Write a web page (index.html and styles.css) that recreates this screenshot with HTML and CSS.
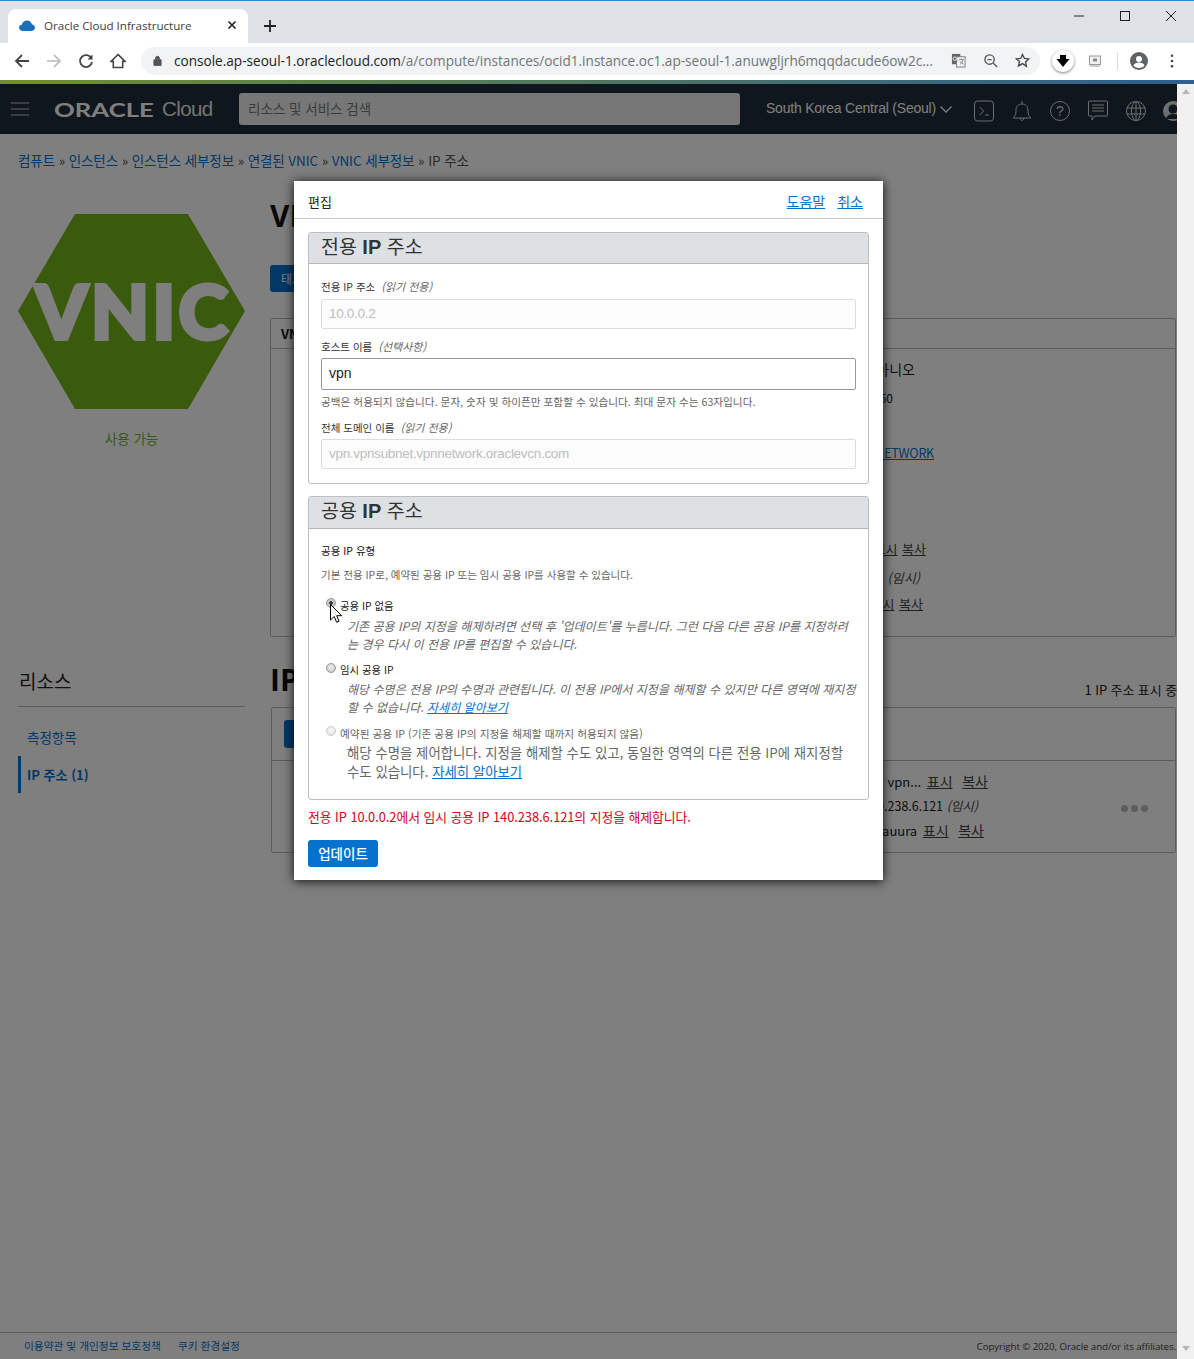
FILE: index.html
```html
<!DOCTYPE html>
<html lang="ko">
<head>
<meta charset="utf-8">
<title>Oracle Cloud Infrastructure</title>
<link rel="stylesheet" href="styles.css">
</head>
<body>
<div class="tabstrip">
  <div class="tab">
    <svg class="favicon" viewBox="0 0 16 11"><path d="M4 11C1.8 11 0 9.6 0 7.7 0 6 1.3 4.8 2.9 4.5 3.6 2 5.6 0.5 8 0.5c2.600 0 4.500 1.700 5 4 1.500 0.300 3 1.400 3 3.200 0 1.900-1.600 3.300-3.600 3.300z" fill="#1a6fb8"/></svg>
    <span class="tab-title">Oracle Cloud Infrastructure</span>
    <svg class="tab-x" viewBox="0 0 10 10"><path d="M1.500 1.500l7 7M8.500 1.500l-7 7" stroke="#222" stroke-width="1.700"/></svg>
  </div>
  <svg class="tab-plus" viewBox="0 0 12 12"><path d="M6 0v12M0 6h12" stroke="#222" stroke-width="1.800"/></svg>
  <div class="winctl">
    <svg viewBox="0 0 12 12"><path d="M1 6h10" stroke="#222" stroke-width="1"/></svg>
    <svg viewBox="0 0 12 12"><rect x="1.500" y="1.500" width="9" height="9" fill="none" stroke="#222" stroke-width="1"/></svg>
    <svg viewBox="0 0 12 12"><path d="M1 1l10 10M11 1L1 11" stroke="#222" stroke-width="1"/></svg>
  </div>
</div>
<div class="toolbar">
  <svg class="nav" viewBox="0 0 16 16"><path d="M15 8H2M8 2L2 8l6 6" fill="none" stroke="#444" stroke-width="1.800"/></svg>
  <svg class="nav" viewBox="0 0 16 16"><path d="M1 8h13M8 2l6 6-6 6" fill="none" stroke="#b4b6b8" stroke-width="1.600"/></svg>
  <svg class="nav" viewBox="0 0 16 16"><path d="M13.500 5.500A6 6 0 1 0 14 9" fill="none" stroke="#444" stroke-width="1.800"/><path d="M14.500 1.500v5h-5z" fill="#444"/></svg>
  <svg class="nav" viewBox="0 0 16 16"><path d="M8 1.500L1 8.500h2.300V14.500h9.400V8.500H15z" fill="none" stroke="#444" stroke-width="1.600"/></svg>
  <div class="omnibox">
    <svg class="lock" viewBox="0 0 10 12"><path d="M1 5.200h8V11.500H1zM2.800 5V3.500a2.200 2.200 0 0 1 4.400 0V5" fill="#555" stroke="#555" stroke-width="1"/></svg>
    <span class="url"><span class="host">console.ap-seoul-1.oraclecloud.com</span>/a/compute/instances/ocid1.instance.oc1.ap-seoul-1.anuwgljrh6mqqdacude6ow2c...</span>
    <svg class="omni-i" viewBox="0 0 16 16"><rect x="1" y="1" width="9" height="11" fill="#666"/><rect x="6" y="4" width="9" height="11" fill="#f4f4f4" stroke="#777"/><path d="M8.500 7h5M11 6v1M9.500 12c2-1 3-3 3.500-5M10 9c1 1.500 2 2.500 3.500 3" stroke="#666" fill="none" stroke-width=".8"/><circle cx="4" cy="6" r="1.800" fill="none" stroke="#fff" stroke-width=".9"/></svg>
    <svg class="omni-i" viewBox="0 0 16 16"><circle cx="7" cy="7" r="5" fill="none" stroke="#555" stroke-width="1.400"/><path d="M11 11l4 4M4.800 7h4.400" stroke="#555" stroke-width="1.400"/></svg>
    <svg class="omni-i" viewBox="0 0 16 16"><path d="M8 1.500l2 4.300 4.700.5-3.500 3.200 1 4.700L8 11.300l-4.200 2.400 1-4.700L1.300 6.300 6 5.800z" fill="none" stroke="#444" stroke-width="1.400"/></svg>
  </div>
  <div class="ext-pin"><svg viewBox="0 0 14 14"><path d="M4 1h6v4h3.500L7 13 .5 5H4z" fill="#000"/></svg></div>
  <svg class="ext-box" viewBox="0 0 12 12"><rect x=".5" y="1" width="11" height="8.500" fill="#f1f1f1" stroke="#999"/><rect x="4" y="3.500" width="4" height="3" fill="#888"/><path d="M1 11h10" stroke="#999"/></svg>
  <span class="tool-sep"></span>
  <svg class="avatar" viewBox="0 0 18 18"><circle cx="9" cy="9" r="9" fill="#5f6368"/><circle cx="9" cy="7" r="3" fill="#fff"/><path d="M3.500 13.500c1-2.300 3-3 5.500-3s4.500.7 5.500 3C13 15.300 11 16 9 16s-4-.7-5.500-2.500z" fill="#fff"/></svg>
  <svg class="kebab" viewBox="0 0 4 16"><circle cx="2" cy="2" r="1.500" fill="#444"/><circle cx="2" cy="8" r="1.500" fill="#444"/><circle cx="2" cy="14" r="1.500" fill="#444"/></svg>
</div>
<div class="accent"></div>
<div class="viewport">
  <div class="page">
    <header class="topbar">
      <svg class="burger" viewBox="0 0 18 14"><path d="M0 1h18M0 7h18M0 13h18" stroke="#c9c9c9" stroke-width="1.200"/></svg>
      <div class="logo"><span class="logo-o">ORACLE</span><span class="logo-c">Cloud</span></div>
      <div class="search">리소스 및 서비스 검색</div>
      <div class="region">South Korea Central (Seoul)
        <svg viewBox="0 0 12 7"><path d="M.5.500L6 6l5.500-5.500" fill="none" stroke="#fff" stroke-width="1.300"/></svg>
      </div>
      <div class="top-icons">
        <svg viewBox="0 0 20 22"><rect x=".5" y="1" width="19" height="20" rx="3" fill="none" stroke="#ddd"/><path d="M6 7l3.500 4L6 15M11 15h4" fill="none" stroke="#ddd"/></svg>
        <svg viewBox="0 0 20 22"><path d="M1 18h18c-2-2-3-3-3-8 0-3.500-2.500-6-6-6S4 6.500 4 10c0 5-1 6-3 8zM8 18c0 3 4 3 4 0M10 4V1" fill="none" stroke="#ddd"/></svg>
        <svg viewBox="0 0 20 22"><circle cx="10" cy="11" r="9.500" fill="none" stroke="#ddd"/><text x="10" y="16" class="q-mark">?</text></svg>
        <svg viewBox="0 0 20 22"><path d="M1.500 1h17a1 1 0 0 1 1 1v13a1 1 0 0 1-1 1H7l-3 4v-4H1.500a1 1 0 0 1-1-1V2a1 1 0 0 1 1-1zM4 5h12M4 8h12M4 11h12" fill="none" stroke="#ddd"/></svg>
        <svg viewBox="0 0 20 22"><circle cx="10" cy="11" r="9.500" fill="none" stroke="#ddd"/><ellipse cx="10" cy="11" rx="4.500" ry="9.500" fill="none" stroke="#ddd"/><path d="M1 8h18M1 14h18M10 1.500v19" stroke="#ddd" fill="none"/></svg>
        <svg class="top-user" viewBox="0 0 20 22"><circle cx="10" cy="11" r="10" fill="#ddd"/><circle cx="10" cy="9" r="4.500" fill="#1e2c3a"/><path d="M3 19c1-4 4-5 7-5s6 1 7 5" fill="#1e2c3a"/></svg>
      </div>
    </header>
    <nav class="crumbs"><a>컴퓨트</a> » <a>인스턴스</a> » <a>인스턴스 세부정보</a> » <a>연결된 VNIC</a> » <a>VNIC 세부정보</a> » IP 주소</nav>
    <div class="columns">
      <aside class="side">
        <svg class="hex" viewBox="0 0 227 195"><polygon points="0,97 57,0 170,0 227,97 170,195 57,195" fill="#74b41c"/><text x="17" y="124.500" class="hex-text" textLength="193" lengthAdjust="spacing">VNIC</text></svg>
        <div class="status">사용 가능</div>
        <h3 class="res-title">리소스</h3>
        <ul class="res-list">
          <li class="res-item">측정항목</li>
          <li class="res-item res-active">IP 주소 (1)</li>
        </ul>
      </aside>
      <main class="main">
        <h1 class="vnic-title">VNIC 세부정보</h1>
        <div class="tag-btn">태그 추가</div>
        <section class="info">
          <h4 class="info-title">VNIC 정보</h4>
          <div class="info-top"></div>
          <div class="info-body">
            <div class="kv kv-a">프라이빗 IP 확인: 아니오</div>
            <div class="kv kv-b">MAC 주소: 02:00:17:00:00:50</div>
            <div class="kv kv-c">가상 클라우드 네트워크: <a class="under">VPNNETWORK</a></div>
            <div class="kv kv-d">OCID: ...wauura <span class="plain-l">표시</span> <span class="plain-l">복사</span></div>
            <div class="kv kv-e">IP 주소: 140.238.6.121 <i>(임시)</i></div>
            <div class="kv kv-f">OCID: ...wau <span class="plain-l">표시</span> <span class="plain-l">복사</span></div>
          </div>
        </section>
        <div class="ip-head">
          <h2 class="ip-title">IP 주소</h2>
          <span class="ip-count">1 IP 주소 표시 중</span>
        </div>
        <section class="ip-table">
          <div class="ip-tools"><span class="ip-btn"></span></div>
          <div class="ip-row">
            <div class="ip-lines">
              <div class="il il-a">전체 도메인 이름: vpn... <span class="plain-l gap gap-first">표시</span> <span class="plain-l gap">복사</span></div>
              <div class="il il-b">공용 IP 주소: 140.238.6.121 <i>(임시)</i></div>
              <div class="il il-c">OCID: ...vauura <span class="plain-l gap gap-first">표시</span> <span class="plain-l gap">복사</span></div>
            </div>
            <div class="dots"><span></span><span></span><span></span></div>
          </div>
        </section>
      </main>
    </div>
    <footer class="foot">
      <div class="foot-links"><a>이용약관 및 개인정보 보호정책</a><a>쿠키 환경설정</a></div>
      <div class="copy">Copyright © 2020, Oracle and/or its affiliates.</div>
    </footer>
    <div class="overlay"></div>
    <div class="modal">
      <div class="modal-head">
        <span>편집</span>
        <span class="modal-links"><a class="link">도움말</a><a class="link">취소</a></span>
      </div>
      <div class="modal-body">
        <section class="panel panel-one">
          <h2 class="panel-head">전용 <b>IP</b> 주소</h2>
          <div class="panel-content">
            <label class="flabel">전용 IP 주소 <i>(읽기 전용)</i></label>
            <div class="input input-ro">10.0.0.2</div>
            <label class="flabel flabel-gap">호스트 이름 <i>(선택사항)</i></label>
            <div class="input input-on">vpn</div>
            <p class="help">공백은 허용되지 않습니다. 문자, 숫자 및 하이픈만 포함할 수 있습니다. 최대 문자 수는 63자입니다.</p>
            <label class="flabel flabel-gap2">전체 도메인 이름 <i>(읽기 전용)</i></label>
            <div class="input input-ro input-last">vpn.vpnsubnet.vpnnetwork.oraclevcn.com</div>
          </div>
        </section>
        <section class="panel panel-two">
          <h2 class="panel-head">공용 <b>IP</b> 주소</h2>
          <div class="panel-content panel-content-two">
            <div class="flabel flabel-dark">공용 IP 유형</div>
            <p class="help help-type">기본 전용 IP로, 예약된 공용 IP 또는 임시 공용 IP를 사용할 수 있습니다.</p>
            <div class="opt opt-first">
              <span class="radio radio-on"></span><span class="opt-label">공용 IP 없음</span>
              <p class="opt-desc">기존 공용 IP의 지정을 해제하려면 선택 후 '업데이트'를 누릅니다. 그런 다음 다른 공용 IP를 지정하려는 경우 다시 이 전용 IP를 편집할 수 있습니다.</p>
            </div>
            <div class="opt opt-temp">
              <span class="radio"></span><span class="opt-label">임시 공용 IP</span>
              <p class="opt-desc">해당 수명은 전용 IP의 수명과 관련됩니다. 이 전용 IP에서 지정을 해제할 수 있지만 다른 영역에 재지정할 수 없습니다. <a class="link">자세히 알아보기</a></p>
            </div>
            <div class="opt opt-off">
              <span class="radio radio-dis"></span><span class="opt-label">예약된 공용 IP (기존 공용 IP의 지정을 해제할 때까지 허용되지 않음)</span>
              <p class="opt-plain">해당 수명을 제어합니다. 지정을 해제할 수도 있고, 동일한 영역의 다른 전용 IP에 재지정할 수도 있습니다. <a class="link">자세히 알아보기</a></p>
            </div>
          </div>
        </section>
        <p class="warn">전용 IP 10.0.0.2에서 임시 공용 IP 140.238.6.121의 지정을 해제합니다.</p>
        <div class="update">업데이트</div>
      </div>
      <svg class="cursor" viewBox="0 0 12 19"><path d="M.5.500v15.500l3.700-3.500 2.400 5.800 2.500-1-2.400-5.600h5z" fill="#fff" stroke="#000"/></svg>
    </div>
  </div>
  <div class="scrollbar">
    <svg viewBox="0 0 8 5"><path d="M4 0l4 5H0z" fill="#b5b5b5"/></svg>
    <svg viewBox="0 0 8 5"><path d="M4 5l4-5H0z" fill="#b5b5b5"/></svg>
  </div>
</div>
</body>
</html>
```
FILE: styles.css
```css
* { box-sizing: border-box; }
html, body { margin: 0; padding: 0; }
body {
  width: 1194px; height: 1359px; overflow: hidden;
  display: flex; flex-direction: column;
  font-family: "Noto Sans CJK KR", "Liberation Sans", sans-serif;
  background: #fff; color: #222;
}
p, h1, h2, h3, h4, ul { margin: 0; padding: 0; }
svg { display: block; flex: none; }

/* browser chrome */
.tabstrip { height: 43px; background: #dee1e6; border-top: 1px solid #2e87c8; display: flex; align-items: flex-end; padding-left: 8px; position: relative; flex: none; }
.tab { width: 240px; height: 34px; background: #fff; border-radius: 8px 8px 0 0; display: flex; align-items: center; padding: 0 11px 2px 11px; }
.favicon { width: 16px; height: 11px; margin-top: 1px; }
.tab-title { font: 11.600px "Open Sans", sans-serif; color: #3c4043; margin-left: 9px; flex: 1; white-space: nowrap; }
.tab-x { width: 10px; height: 10px; }
.tab-plus { width: 12px; height: 12px; margin: 0 0 11px 16px; }
.winctl { position: absolute; right: 17px; top: 9px; display: flex; gap: 34px; }
.winctl svg { width: 12px; height: 12px; }
.toolbar { height: 37px; background: #fff; display: flex; align-items: center; padding: 0 0 2px 14px; flex: none; }
.nav { width: 16px; height: 16px; margin-right: 16px; }
.omnibox { width: 899px; height: 28px; margin-left: -1px; background: #f1f3f4; border-radius: 14px; display: flex; align-items: center; padding-left: 12px; flex: none; }
.lock { width: 9px; height: 11px; }
.url { font: 13.600px "Open Sans", sans-serif; color: #70757a; margin-left: 12px; width: 760px; white-space: nowrap; overflow: hidden; flex: none; }
.host { color: #222; }
.omni-i { width: 15px; height: 15px; margin-left: 17px; }
.ext-pin { width: 22px; height: 22px; border-radius: 50%; background: #fff; box-shadow: 0 1px 3px rgba(0,0,0,.5); margin-left: 12px; display: flex; align-items: center; justify-content: center; flex: none; }
.ext-pin svg { width: 14px; height: 14px; }
.ext-box { width: 12px; height: 12px; margin-left: 15px; }
.tool-sep { width: 1px; height: 18px; background: #dadce0; margin-left: 16px; flex: none; }
.avatar { width: 18px; height: 18px; margin-left: 12px; }
.kebab { width: 4px; height: 14px; margin-left: 22px; }
.accent { height: 4px; flex: none; background: linear-gradient(90deg, #6f8f2f, #2d5f92); }

.viewport { flex: 1; display: flex; min-height: 0; }
.scrollbar { width: 17px; background: #f1f1f1; display: flex; flex-direction: column; justify-content: space-between; align-items: center; padding: 5px 0 8px; flex: none; }
.scrollbar svg { width: 8px; height: 5px; }
.page { flex: 1; min-width: 0; position: relative; display: flex; flex-direction: column; background: #fff; overflow: hidden; }

/* console header */
.topbar { height: 50px; background: #1e2c3a; display: flex; align-items: center; color: #fff; flex: none; }
.burger { width: 18px; height: 14px; margin-left: 11px; }
.logo { margin-left: 25px; width: 160px; white-space: nowrap; color: #fff; display: flex; align-items: center; flex: none; }
.logo-o { font: 700 19.500px "Lato", sans-serif; transform: scaleX(1.32); transform-origin: left; display: inline-block; width: 108px; flex: none; }
.logo-c { font: 20.500px "Liberation Sans", sans-serif; letter-spacing: -.6px; color: #e8e8e8; }
.search { width: 501px; height: 32px; margin-left: 25px; background: #eee; border-radius: 3px; color: #777; font-size: 13.500px; line-height: 30px; padding-left: 9px; flex: none; }
.region { font: 14px "Liberation Sans", sans-serif; letter-spacing: -.22px; margin-left: 26px; display: flex; align-items: center; gap: 4px; white-space: nowrap; margin-top: -2px; flex: none; }
.region svg { width: 12px; height: 7px; margin-top: 3px; }
.top-icons { display: flex; margin-left: 22px; gap: 18px; margin-top: 3px; flex: none; }
.top-icons svg { width: 20px; height: 22px; }
.q-mark { font: 14px "Liberation Sans", sans-serif; fill: #ddd; text-anchor: middle; }
.top-user { margin-left: -1px; }

/* page behind */
.crumbs { font-size: 13.500px; line-height: 18px; margin: 17px 0 0 18px; color: #555; letter-spacing: -.1px; flex: none; }
.crumbs a { color: #0572ce; }
.columns { display: flex; flex: none; margin-top: 27px; padding-left: 18px; }
.side { width: 227px; flex: none; padding-top: 18px; }
.hex { width: 227px; height: 195px; }
.hex-text { font: 900 75px "Lato", sans-serif; fill: #fff; stroke: #fff; stroke-width: 4px; }
.status { text-align: center; color: #74b41c; font-size: 13.500px; line-height: 18px; margin-top: 20px; }
.res-title { font-weight: 400; font-size: 19px; line-height: 26px; margin-top: 221px; padding-bottom: 12px; border-bottom: 1px solid #bbb; color: #222; padding-left: 1px; }
.res-list { list-style: none; margin-top: 12px; }
.res-item { font-size: 13.500px; line-height: 37px; height: 37px; padding-left: 9px; color: #0572ce; }
.res-active { border-left: 3px solid #0572ce; padding-left: 6px; font-weight: 700; font-size: 13px; }
.main { margin-left: 25px; width: 906px; flex: none; }
.vnic-title { font: 700 30px "Open Sans", "Noto Sans CJK KR", sans-serif; line-height: 40px; color: #111; white-space: nowrap; }
.tag-btn { width: 80px; height: 27px; margin-top: 29px; background: #0572ce; color: #fff; font-size: 12px; line-height: 27px; padding-left: 11px; border-radius: 3px; }
.info { margin-top: 26px; height: 319px; border: 1px solid #bbb; border-radius: 2px; position: relative; }
.info-title { position: absolute; left: 10px; top: 6px; font-size: 13px; line-height: 18px; color: #111; }
.info-top { height: 30px; border-bottom: 1px solid #bbb; }
.info-body { position: relative; height: 287px; font-size: 13px; }
.kv { position: absolute; white-space: nowrap; line-height: 18px; color: #222; }
.kv-a { right: 260px; top: 11px; font-size: 14px; }
.kv-b { right: 282px; top: 40px; font-size: 12px; }
.kv-c { right: 241px; top: 95px; font-size: 12.500px; letter-spacing: -.2px; }
.kv-d { right: 249px; top: 191px; }
.kv-e { right: 255px; top: 220px; }
.kv-f { right: 252px; top: 246px; }
.under { text-decoration: underline; color: #0572ce; }
.plain-l { text-decoration: underline; color: #444; margin-left: 1px; }
.kv i, .il i { color: #444; }
.ip-head { display: flex; justify-content: space-between; align-items: flex-end; margin-top: 24px; height: 46px; padding-bottom: 8px; }
.ip-title { font: 700 30px "Open Sans", "Noto Sans CJK KR", sans-serif; line-height: 40px; color: #111; margin-bottom: -1px; white-space: nowrap; }
.ip-count { font-size: 13px; line-height: 18px; letter-spacing: -.1px; white-space: nowrap; margin-right: -1px; }
.ip-table { height: 146px; margin-left: 1px; border: 1px solid #bbb; border-radius: 2px; }
.ip-tools { height: 53px; border-bottom: 1px solid #bbb; padding: 12px 0 0 12px; }
.ip-btn { display: block; width: 80px; height: 28px; background: #0572ce; border-radius: 3px; }
.ip-row { position: relative; height: 91px; }
.ip-lines { position: absolute; right: 189px; top: 0; font-size: 13px; }
.il { position: absolute; white-space: nowrap; line-height: 18px; right: 0; }
.il-a { top: 11px; right: -2px; }
.il-b { top: 36px; right: 8px; font-size: 12.500px; }
.il-c { top: 60px; right: 2px; }
.gap { margin-left: 6px; font-size: 14px; }
.gap-first { margin-left: 2px; }
.dots { position: absolute; right: 27px; top: 44px; display: flex; gap: 3px; }
.dots span { width: 7px; height: 7px; border-radius: 50%; background: #bbb; }
.foot { margin-top: auto; height: 27px; border-top: 1px solid #bbb; display: flex; justify-content: space-between; align-items: center; padding: 0 0 2px 24px; font-size: 10.700px; flex: none; }
.foot-links { display: flex; gap: 17px; color: #0572ce; }
.copy { color: #444; font: 9.750px "Open Sans", sans-serif; letter-spacing: -.1px; white-space: nowrap; margin-top: 3px; margin-right: 1px; }

.overlay { position: absolute; inset: 0; background: rgba(0,0,0,.5); }

/* modal */
.modal { position: absolute; left: 294px; top: 97px; width: 589px; height: 699px; background: #fff; box-shadow: 0 1px 10px rgba(0,0,0,.9); }
.modal-head { height: 38px; border-bottom: 1px solid #c4c4c4; display: flex; justify-content: space-between; align-items: center; padding: 3px 20px 0 14px; font-size: 13px; color: #222; }
.modal-links { display: flex; gap: 12px; font-size: 14px; }
.link { color: #0572ce; text-decoration: underline; }
.modal-body { padding: 13px 14px 0; }
.panel { border: 1px solid #bdbfc2; border-radius: 3px; }
.panel-one { height: 252px; }
.panel-two { height: 304px; margin-top: 12px; }
.panel-head { height: 31px; background: #dee1e4; border-bottom: 1px solid #b4b6b9; font-weight: 400; font-size: 19.500px; line-height: 25px; padding-left: 12px; color: #333; white-space: nowrap; }
.panel-two .panel-head { height: 32px; line-height: 26px; }
.panel-head b { font-family: "Liberation Sans", sans-serif; font-size: 20px; }
.panel-content { padding: 14px 12px 0; }
.flabel { display: block; font-size: 10.500px; line-height: 16px; color: #333; white-space: nowrap; }
.flabel i { color: #666; margin-left: 3px; font-size: 11px; }
.flabel-gap { margin-top: 9px; }
.flabel-gap2 { margin-top: 9px; }
.flabel-dark { color: #111; }
.input { border: 1px solid #ddd; border-radius: 2px; font: 14px "Liberation Sans", sans-serif; padding-left: 7px; line-height: 28px; height: 30px; margin-top: 4px; letter-spacing: -.3px; white-space: nowrap; }
.input-ro { color: #bdbdbd; background: #fcfcfc; font-size: 13.500px; }
.input-last { margin-top: 3px; }
.input-on { height: 32px; line-height: 28px; border-color: #999; margin-top: 3px; color: #222; letter-spacing: 0; }
.help { font-size: 10.650px; line-height: 16px; color: #666; margin-top: 4px; white-space: nowrap; }
.help-type { margin-top: 8px; font-size: 10.500px; }
.opt { position: relative; padding-left: 19px; }
.opt-first { margin-top: 15px; }
.opt-temp { margin-top: 9px; }
.opt-temp .opt-desc { margin-top: 2px; }
.opt-off { margin-top: 10px; }
.radio { position: absolute; left: 5px; top: 1px; width: 10px; height: 10px; border-radius: 50%; background: radial-gradient(circle at 50% 40%, #f2f2f2, #bdbdbd); border: 1px solid #999; }
.radio-on { background: radial-gradient(circle, #444 28%, #c8c8c8 32%); top: 0; }
.radio-dis { opacity: .5; top: 0; }
.opt-label { display: block; font-size: 10.400px; line-height: 16px; color: #222; white-space: nowrap; }
.opt-off .opt-label { color: #666; font-size: 10.700px; }
.opt-desc { font-size: 12.050px; line-height: 18px; font-style: italic; color: #666; margin: 3px -2px 0 7px; }
.opt-plain { font-size: 13.400px; line-height: 18.500px; color: #666; margin: 1px 0 0 7px; }
.warn { color: #d0021b; font-size: 12.850px; line-height: 18px; margin-top: 8px; letter-spacing: -.05px; white-space: nowrap; }
.update { width: 70px; height: 27px; margin-top: 14px; background: #0572ce; color: #fff; font-size: 13.500px; font-weight: 500; line-height: 26px; text-align: center; border-radius: 3px; }
.cursor { position: absolute; left: 36px; top: 423px; width: 12px; height: 19px; }
```
